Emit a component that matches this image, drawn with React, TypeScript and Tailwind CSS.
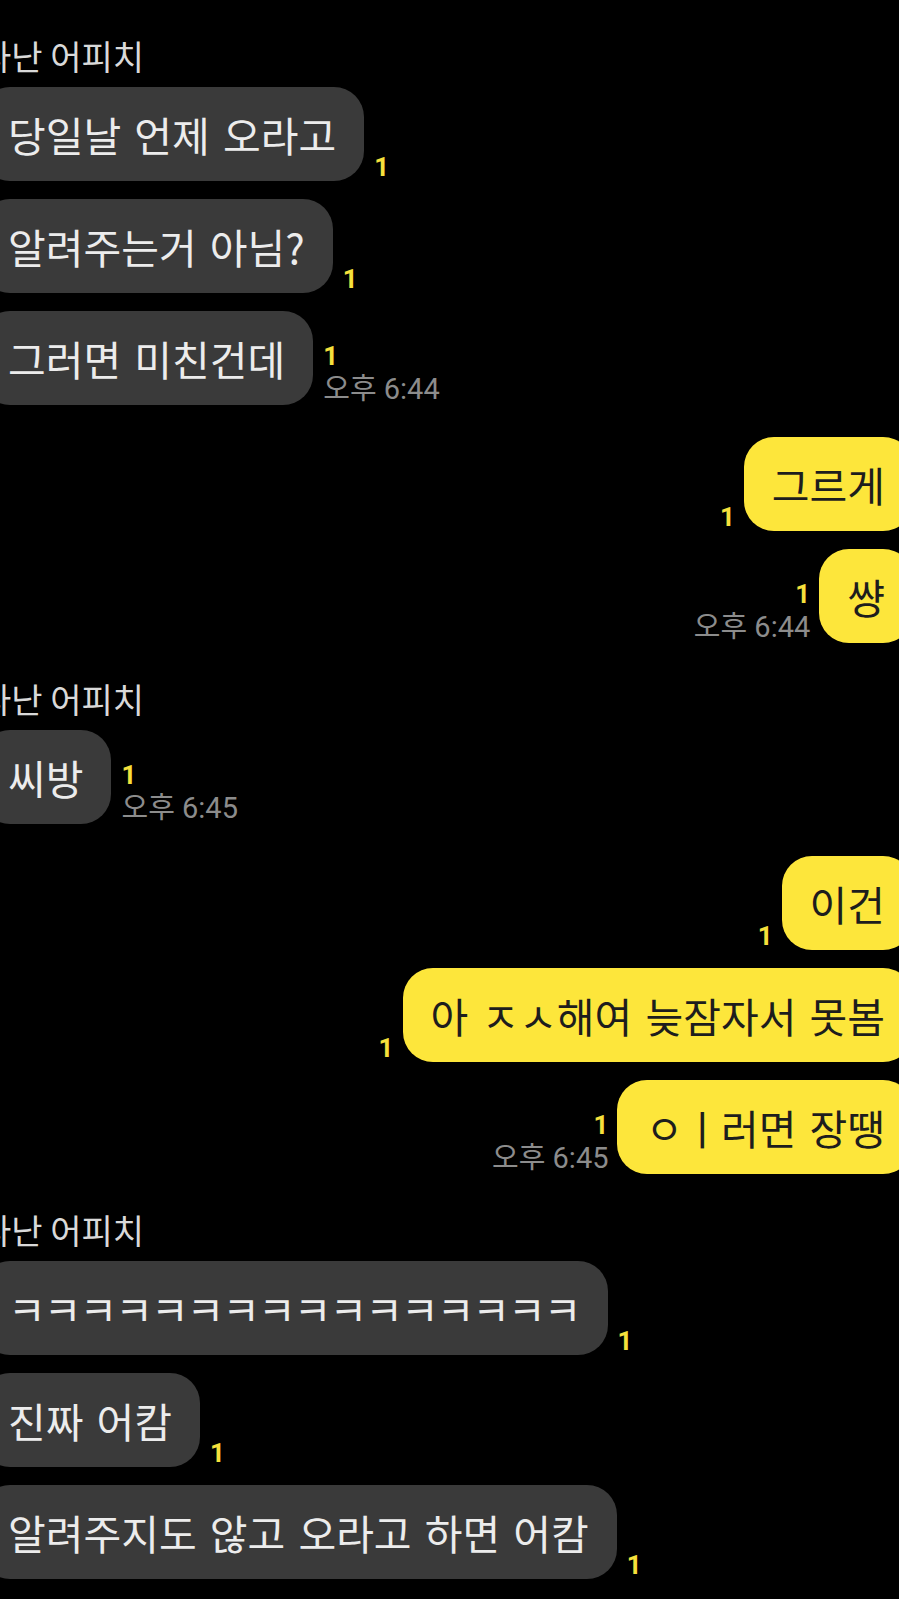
import { FC } from "react";

type Msg = { text: string; time?: string; tight?: boolean };

const kr = "font-['Noto_Sans_CJK_KR',sans-serif]";

const Meta: FC<{ time?: string; side: "left" | "right" }> = ({ time, side }) => (
  <div
    className={`flex flex-col pb-[2px] ${side === "left" ? "items-start" : "items-end"}`}
  >
    <span
      className={`font-['Roboto',sans-serif] font-bold text-[26px] leading-[24px] text-[#f6e03c] ${
        time ? "mb-[5px]" : ""
      }`}
    >
      1
    </span>
    {time && (
      <span className="font-['Roboto','Noto_Sans_CJK_KR',sans-serif] text-[29px] leading-[32px] text-[#8c8c8c] whitespace-nowrap -mb-[2px]">
        {time}
      </span>
    )}
  </div>
);

const Bubble: FC<{ text: string; mine?: boolean; tight?: boolean }> = ({
  text,
  mine,
  tight,
}) => (
  <div
    className={`${kr} h-[94px] px-[28px] flex items-center rounded-[30px] text-[41px] leading-none whitespace-nowrap [word-spacing:4px] ${
      tight ? "tracking-[-2px]" : ""
    } ${mine ? "bg-[#fde63b] text-[#1d1d1d]" : "bg-[#3a3a3a] text-[#ececec]"}`}
  >
    {text}
  </div>
);

const Incoming: FC<{ name: string; messages: Msg[] }> = ({ name, messages }) => (
  <div className="flex flex-col items-start">
    <div className={`${kr} pt-[4px] mb-[11px] text-[34px] leading-[40px] text-[#d9d9d9]`}>
      {name}
    </div>
    <div className="flex flex-col items-start gap-[18px]">
      {messages.map((m, i) => (
        <div key={i} className="flex items-end gap-[10px]">
          <Bubble text={m.text} tight={m.tight} />
          <Meta time={m.time} side="left" />
        </div>
      ))}
    </div>
  </div>
);

const Outgoing: FC<{ messages: Msg[] }> = ({ messages }) => (
  <div className="flex flex-col items-end gap-[18px]">
    {messages.map((m, i) => (
      <div key={i} className="flex items-end gap-[9px]">
        <Meta time={m.time} side="right" />
        <Bubble text={m.text} mine />
      </div>
    ))}
  </div>
);

export default function App() {
  return (
    <div className="w-[899px] h-[1599px] bg-black overflow-hidden">
      <div className="ml-[-20px] mr-[-14px] pt-[32px] flex flex-col gap-[32px]">
        <Incoming
          name="라난 어피치"
          messages={[
            { text: "당일날 언제 오라고" },
            { text: "알려주는거 아님?" },
            { text: "그러면 미친건데", time: "오후 6:44" },
          ]}
        />
        <Outgoing
          messages={[{ text: "그르게" }, { text: "썅", time: "오후 6:44" }]}
        />
        <Incoming name="라난 어피치" messages={[{ text: "씨방", time: "오후 6:45" }]} />
        <Outgoing
          messages={[
            { text: "이건" },
            { text: "아 ㅈㅅ해여 늦잠자서 못봄" },
            { text: "ㅇㅣ러면 장땡", time: "오후 6:45" },
          ]}
        />
        <Incoming
          name="라난 어피치"
          messages={[
            { text: "ㅋㅋㅋㅋㅋㅋㅋㅋㅋㅋㅋㅋㅋㅋㅋㅋ", tight: true },
            { text: "진짜 어캄" },
            { text: "알려주지도 않고 오라고 하면 어캄" },
          ]}
        />
      </div>
    </div>
  );
}
